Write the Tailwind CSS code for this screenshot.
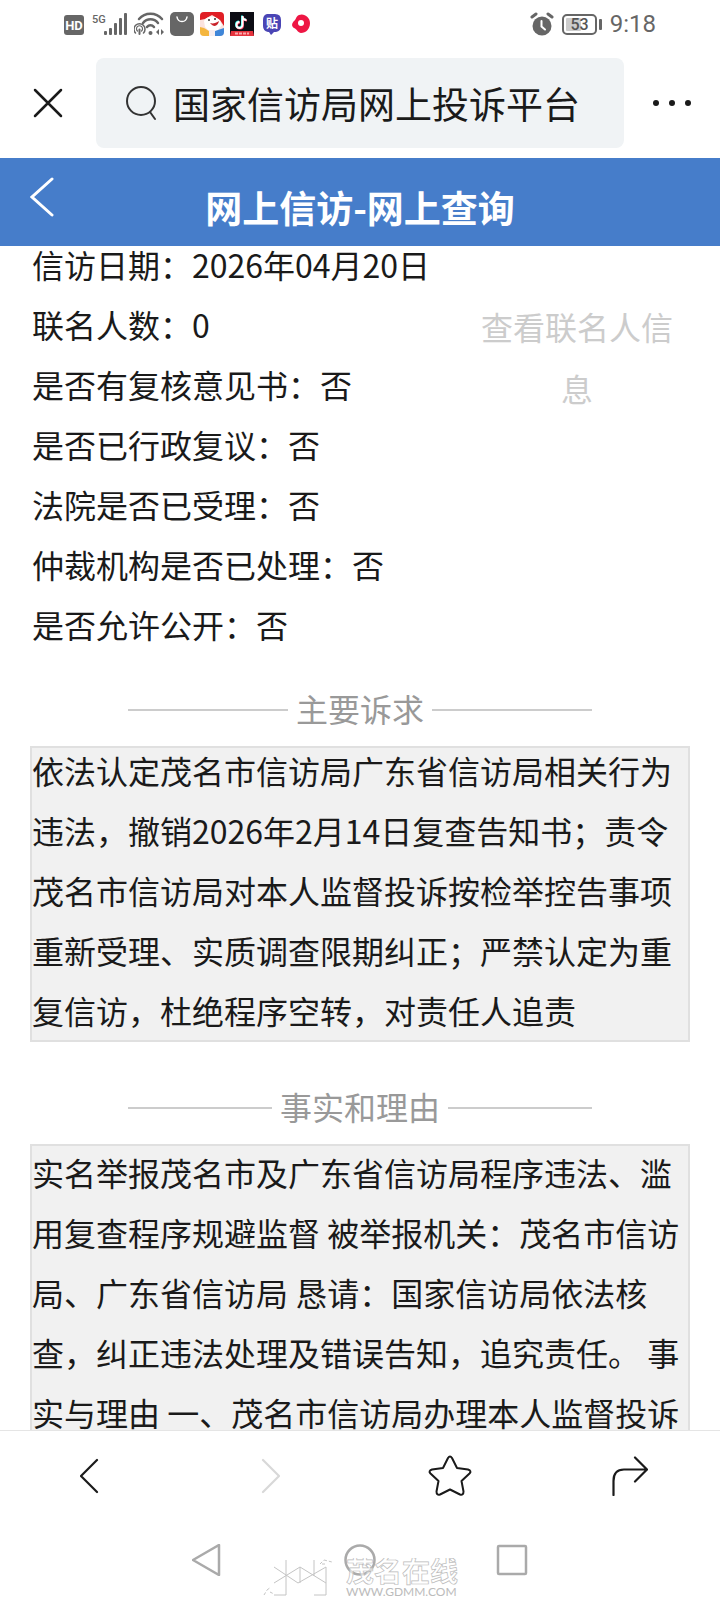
<!DOCTYPE html>
<html lang="zh-CN">
<head>
  <meta charset="UTF-8">
  <meta name="viewport" content="width=device-width, initial-scale=1.0">
  <title>网上信访-网上查询</title>
  <script src="https://cdn.jsdelivr.net/npm/@tailwindcss/browser@4"></script>
</head>
<body class="relative flex h-screen flex-col bg-white font-['Noto_Sans_CJK_SC',sans-serif] text-[#1a1a1a]">

  <!-- Phone status bar -->
  <div class="flex h-12 shrink-0 items-center justify-between pr-16 pl-16 text-[#666]">
    <div class="flex items-center gap-1.5">
      <svg class="h-6 w-[22px]" viewBox="0 0 22 24">
        <rect x="0" y="3" width="20" height="20" rx="3" fill="#666"/>
        <text x="10" y="18" text-anchor="middle" font-family="Roboto, sans-serif" font-size="13" font-weight="700" fill="#fff">HD</text>
      </svg>
      <svg class="h-6 w-9" viewBox="0 0 36 24" fill="#666">
        <text x="0" y="11" font-family="Roboto, sans-serif" font-size="11" font-weight="500">5G</text>
        <rect x="12" y="19" width="3" height="4" rx="1"/>
        <rect x="17" y="16" width="3" height="7" rx="1"/>
        <rect x="22" y="11" width="3" height="12" rx="1"/>
        <rect x="27" y="6" width="3" height="17" rx="1"/>
        <rect x="32" y="1" width="3" height="22" rx="1"/>
      </svg>
      <svg class="h-6 w-[30px]" viewBox="0 0 30 24" fill="none" stroke="#666" stroke-width="2" stroke-linecap="round">
        <path d="M5 7C11 0 22 0 28 7" stroke-width="2.500"/>
        <path d="M9 11C13 6 20 6 24 11" stroke-width="2.500"/>
        <path d="M13 15C15 12.500 18 12.500 20 15" stroke-width="2.500"/>
        <circle cx="16.500" cy="21" r="2" fill="#666" stroke="none"/>
        <path d="M1.500 21A5.500 5.500 0 1 1 9.500 21" stroke-width="1.500"/>
        <path d="M3.500 19A3 3 0 1 1 7.500 19" stroke-width="1.200"/>
        <path d="M5.500 17.500V22" stroke-width="2"/>
        <path d="M22 20l3-3v6zM30 20l-3-3v6z" fill="#666" stroke="none"/>
      </svg>
      <svg class="size-6" viewBox="0 0 24 24">
        <rect width="24" height="24" rx="5" fill="#666"/>
        <path d="M7 5c1 6 9 6 10 0" fill="none" stroke="#fff" stroke-width="1.500" stroke-linecap="round"/>
      </svg>
      <svg class="size-6" viewBox="0 0 24 24">
        <rect width="24" height="24" rx="4" fill="#fbe3df"/>
        <path d="M0 8V4a4 4 0 0 1 4-4h16a4 4 0 0 1 4 4v10l-4-6L12 3 5 7z" fill="#e01f26"/>
        <path d="M4 9c3-6 12-6 16 0l2 4-5 6H9L5 15z" fill="#fff"/>
        <path d="M10 11c3 1 6 0 9-2-1 5-5 7-9 2z" fill="#c9222a"/>
        <circle cx="9" cy="8" r="1" fill="#333"/><circle cx="15" cy="7" r="1" fill="#333"/>
        <path d="M0 15l4 1 5 3v5H4a4 4 0 0 1-4-4z" fill="#f4b63f"/>
        <path d="M15 19l9-3v4a4 4 0 0 1-4 4h-5z" fill="#3f86d8"/>
        <rect x="9" y="18" width="6" height="6" fill="#f7eef0"/>
      </svg>
      <svg class="size-6" viewBox="0 0 24 24">
        <rect width="24" height="24" fill="#0c0c14"/>
        <g fill="none" stroke-width="2">
          <path d="M12 3.500v9a3 3 0 1 1-3-3M12 3.500c0 2.500 2 4 4 4" stroke="#25f4ee"/>
          <path d="M13 4.500v9a3 3 0 1 1-3-3M13 4.500c0 2.500 2 4 4 4" stroke="#fe2c55"/>
          <path d="M12.500 4v9a3 3 0 1 1-3-3M12.500 4c0 2.500 2 4 4 4" stroke="#fff"/>
        </g>
        <path d="M1 19h22l1 5H0z" fill="#e5333d"/>
        <path d="M5 21.500h14" stroke="#f9a9ad" stroke-width="2" stroke-dasharray="3 1"/>
      </svg>
      <svg class="size-6" viewBox="0 0 24 24">
        <path d="M7 2h8q6 0 6 6v6q0 5-5 6h-2l-3 3-2-3H8q-5-1-5-6V8q0-5 4-6z" fill="#4a45b5"/>
        <text x="12" y="16" text-anchor="middle" font-family="Noto Sans CJK SC, sans-serif" font-size="12" font-weight="700" fill="#fff">贴</text>
      </svg>
      <svg class="size-6" viewBox="0 0 24 24">
        <path d="M9 3c5-2 11 2 11 8s-4 10-9 10c-3 0-4-4-7-5-3-2-2-5 0-7 2-1 2-5 5-6z" fill="#ee1644"/>
        <circle cx="11" cy="11" r="3" fill="#fff"/>
      </svg>
    </div>
    <div class="flex items-center gap-2">
      <svg class="size-6" viewBox="0 0 24 24">
        <circle cx="12" cy="14" r="9.500" fill="#666"/>
        <path d="M2 5l4-3M22 5l-4-3" stroke="#666" stroke-width="3" stroke-linecap="round"/>
        <path d="M11.500 9v5.500l3.500 3" fill="none" stroke="#fff" stroke-width="2" stroke-linecap="round"/>
      </svg>
      <svg class="h-6 w-10" viewBox="0 0 40 24">
        <rect x="1" y="3" width="33" height="19" rx="4" fill="none" stroke="#666" stroke-width="2"/>
        <rect x="4" y="6" width="15" height="13" rx="1" fill="#ccc"/>
        <rect x="37" y="7" width="3" height="11" rx="1" fill="#666"/>
        <text x="17.500" y="18" text-anchor="middle" font-family="Roboto, sans-serif" font-size="16" font-weight="500" fill="#555">53</text>
      </svg>
      <span class="font-[Roboto,sans-serif] text-2xl">9:18</span>
    </div>
  </div>

  <!-- Browser address bar -->
  <div class="flex h-[110px] shrink-0 items-center pb-px">
    <button type="button" aria-label="关闭" class="flex w-24 justify-center">
      <svg class="size-8" viewBox="0 0 32 32" fill="none" stroke="#1a1a1a" stroke-width="2.500" stroke-linecap="round"><path d="M3 3l26 26M29 3L3 29"/></svg>
    </button>
    <label class="flex h-[90px] min-w-0 flex-1 items-center gap-4 rounded-lg bg-[#f0f3f5] pl-[29px]">
      <svg class="h-9 w-8 shrink-0" viewBox="0 0 32 36" fill="none" stroke="#333" stroke-width="2" stroke-linecap="round">
        <circle cx="16" cy="16" r="14"/><path d="M25 27l5 7"/>
      </svg>
      <input type="text" aria-label="搜索或输入网址" value="国家信访局网上投诉平台" class="w-full min-w-0 bg-transparent pt-0.5 text-[37px] outline-none">
    </label>
    <button type="button" aria-label="更多" class="flex w-24 justify-center">
      <svg class="h-2 w-10" viewBox="0 0 40 8" fill="#1a1a1a"><circle cx="4" cy="4" r="3"/><circle cx="20" cy="4" r="3"/><circle cx="36" cy="4" r="3"/></svg>
    </button>
  </div>

  <!-- Page header -->
  <header class="relative z-10 grid h-[88px] shrink-0 grid-cols-[84px_1fr_84px] items-center bg-[#467dca] text-white">
    <button type="button" aria-label="返回" class="flex justify-center pb-2.5">
      <svg class="h-10 w-6" viewBox="0 0 24 40" fill="none" stroke="#fff" stroke-width="3" stroke-linecap="round"><path d="M22 2L2 20l20 18"/></svg>
    </button>
    <h1 class="pt-2.5 text-center text-[37px] leading-none font-bold">网上信访-网上查询</h1>
  </header>

  <!-- Scrolled content -->
  <main class="min-h-0 flex-1 overflow-hidden px-[30px] text-[32px] leading-[60px]">
    <div class="-mt-3 flex px-0.5">
      <ul class="flex-1">
        <li>信访日期：2026年04月20日</li>
        <li>联名人数：0</li>
        <li>是否有复核意见书：否</li>
        <li>是否已行政复议：否</li>
        <li>法院是否已受理：否</li>
        <li>仲裁机构是否已处理：否</li>
        <li>是否允许公开：否</li>
      </ul>
      <div class="w-[222px] pt-[61px]">
        <button type="button" class="w-full px-3 text-center leading-[62px] text-[#ccc]">查看联名人信息</button>
      </div>
    </div>

    <section class="pt-6">
      <div class="mx-auto flex w-[464px] max-w-full items-center gap-2">
        <span class="mt-1 h-0.5 flex-1 bg-[#ccc]"></span>
        <h2 class="text-[#999]">主要诉求</h2>
        <span class="mt-1 h-0.5 flex-1 bg-[#ccc]"></span>
      </div>
      <div class="mt-2 border-2 border-[#e0e0e0] bg-[#f1f1f1]">
        <p class="-mt-2">依法认定茂名市信访局广东省信访局相关行为违法，撤销2026年2月14日复查告知书；责令茂名市信访局对本人监督投诉按检举控告事项重新受理、实质调查限期纠正；严禁认定为重复信访，杜绝程序空转，对责任人追责</p>
      </div>
    </section>

    <section class="pt-[34px]">
      <div class="mx-auto flex w-[464px] max-w-full items-center gap-2">
        <span class="mt-1 h-0.5 flex-1 bg-[#ccc]"></span>
        <h2 class="text-[#999]">事实和理由</h2>
        <span class="mt-1 h-0.5 flex-1 bg-[#ccc]"></span>
      </div>
      <div class="mt-2 border-2 border-[#e0e0e0] bg-[#f1f1f1]">
        <p class="-mt-1">实名举报茂名市及广东省信访局程序违法、滥用复查程序规避监督 被举报机关：茂名市信访局、广东省信访局 恳请：国家信访局依法核查，纠正违法处理及错误告知，追究责任。 事实与理由 一、茂名市信访局办理本人监督投诉</p>
      </div>
    </section>
  </main>

  <!-- Browser toolbar -->
  <nav class="grid h-[90px] shrink-0 grid-cols-4 items-center justify-items-center border-t border-[#e5e5e5] bg-white" aria-label="浏览器工具栏">
    <button type="button" aria-label="后退">
      <svg class="h-9 w-5" viewBox="0 0 20 36" fill="none" stroke="#1a1a1a" stroke-width="2.200" stroke-linecap="round" stroke-linejoin="round"><path d="M17 2L1 18l16 16"/></svg>
    </button>
    <button type="button" aria-label="前进">
      <svg class="h-9 w-5" viewBox="0 0 20 36" fill="none" stroke="#d8d8d8" stroke-width="2.200" stroke-linecap="round" stroke-linejoin="round"><path d="M3 2l16 16L3 34"/></svg>
    </button>
    <button type="button" aria-label="收藏">
      <svg class="size-11" viewBox="0 0 44 44" fill="none" stroke="#1a1a1a" stroke-width="2" stroke-linejoin="round"><path d="M20 4Q22 1 24 4L29 14L40 15.500Q44 17 41.500 19.500L33.500 27L35.500 37.500Q35.500 41.500 32 40.500L22 35.500L12 40.500Q8.500 41.500 8.500 37.500L10.500 27L2.500 19.500Q0 17 4 15.500L15 14Z"/></svg>
    </button>
    <button type="button" aria-label="分享">
      <svg class="h-10 w-9" viewBox="0 0 36 40" fill="none" stroke="#1a1a1a" stroke-width="2.200" stroke-linecap="round" stroke-linejoin="round"><path d="M1.500 39V25C1.500 18 5 13.500 12 13.500H35M23 1.500l12 12-12 12"/></svg>
    </button>
  </nav>

  <!-- System navigation -->
  <nav class="flex h-20 shrink-0 items-center justify-center gap-[120px] bg-white" aria-label="系统导航">
    <button type="button" aria-label="系统返回">
      <svg class="size-8" viewBox="0 0 32 32" fill="none" stroke="#aaa" stroke-width="2.500" stroke-linejoin="round"><path d="M27 1v30L1 16z"/></svg>
    </button>
    <button type="button" aria-label="主屏幕">
      <svg class="size-8" viewBox="0 0 32 32" fill="none" stroke="#aaa" stroke-width="2.500"><circle cx="16" cy="16" r="14.500"/></svg>
    </button>
    <button type="button" aria-label="最近任务">
      <svg class="size-8" viewBox="0 0 32 32" fill="none" stroke="#aaa" stroke-width="2.500"><rect x="2" y="2" width="28" height="28" rx="1"/></svg>
    </button>
  </nav>

  <!-- Site watermark -->
  <div class="pointer-events-none absolute bottom-0 left-1/2 z-20 flex h-11 w-[196px] -translate-x-1/2 items-center gap-3 text-[#bbb]">
    <svg class="h-10 w-[72px] shrink-0" viewBox="0 0 72 40" fill="none" stroke="#c4c4c4" stroke-width="1">
      <path d="M12 37H24V2M12 9l24 16L64 9M12 25l26-16L64 25M38 9v16M52 2v16M64 9v28H52"/>
      <path d="M2 37l3-5M5 32l4-3M8 34l4 2M58 6l4-4M62 2l8 2M60 6h4" stroke-dasharray="3 2"/>
    </svg>
    <div class="shrink-0">
      <svg class="h-7 w-[114px]" viewBox="0 0 114 28">
        <text x="0" y="24" font-family="Noto Sans CJK SC, sans-serif" font-size="28" font-weight="700" fill="#fff" fill-opacity="0.6" stroke="#bbb" stroke-width="0.700">茂名在线</text>
      </svg>
      <p class="font-[Lato,sans-serif] text-xs leading-3">WWW.GDMM.COM</p>
    </div>
  </div>
</body>
</html>
